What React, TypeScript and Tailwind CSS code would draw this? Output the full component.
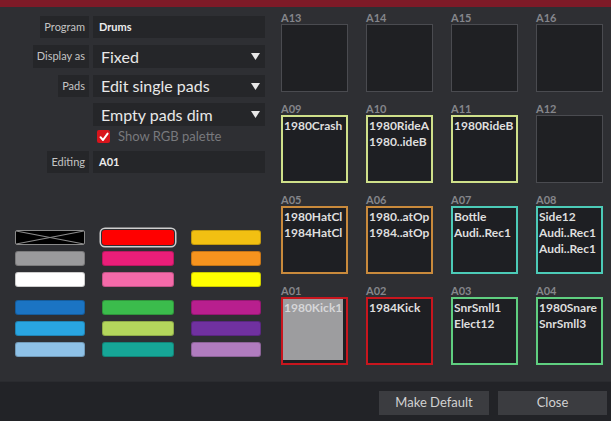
import React from "react";

type Pad = { id: string; lines: string[]; color?: string; filled?: boolean };

const rows: Pad[][] = [
  [
    { id: "A13", lines: [] },
    { id: "A14", lines: [] },
    { id: "A15", lines: [] },
    { id: "A16", lines: [] },
  ],
  [
    { id: "A09", lines: ["1980Crash"], color: "#cfe08a" },
    { id: "A10", lines: ["1980RideA", "1980..ideB"], color: "#cfe08a" },
    { id: "A11", lines: ["1980RideB"], color: "#cfe08a" },
    { id: "A12", lines: [] },
  ],
  [
    { id: "A05", lines: ["1980HatCl", "1984HatCl"], color: "#c98a3c" },
    { id: "A06", lines: ["1980..atOp", "1984..atOp"], color: "#c98a3c" },
    { id: "A07", lines: ["Bottle", "Audi..Rec1"], color: "#4ccbb8" },
    { id: "A08", lines: ["Side12", "Audi..Rec1", "Audi..Rec1"], color: "#4ccbb8" },
  ],
  [
    { id: "A01", lines: ["1980Kick1"], color: "#c8161e", filled: true },
    { id: "A02", lines: ["1984Kick"], color: "#c8161e" },
    { id: "A03", lines: ["SnrSmll1", "Elect12"], color: "#5fcf80" },
    { id: "A04", lines: ["1980Snare", "SnrSmll3"], color: "#5fcf80" },
  ],
];

function Arrow() {
  return (
    <svg width="9" height="7" viewBox="0 0 9 7" className="shrink-0">
      <path d="M0 0 L9 0 L4.5 7 Z" fill="#e8e8e8" />
    </svg>
  );
}

function Label({ children }: { children: React.ReactNode }) {
  return (
    <div className="w-[86px] flex justify-end">
      <div className="h-full bg-[#252629] px-[4px] flex items-center text-[11px] text-[#c4c4c4]">
        {children}
      </div>
    </div>
  );
}

function PadCell({ pad }: { pad: Pad }) {
  const bordered = !!pad.color;
  return (
    <div className="flex flex-col w-[67px]">
      <div className="h-[13px] leading-[13px] text-[11px] font-bold text-[#85868b]">{pad.id}</div>
      <div
        className={
          bordered
            ? "h-[68px] bg-[#1e1f23] border-2 relative"
            : "h-[68px] bg-[#1f2023] border border-[#4a4b50] relative"
        }
        style={bordered ? { borderColor: pad.color } : undefined}
      >
        {pad.filled && (
          <div className="absolute left-0 top-0 right-[3px] bottom-[3px] bg-[#9d9d9f]" />
        )}
        <div className="relative pl-[1px] pt-[1px] text-[12px] leading-[16px] font-bold text-[#dedede] whitespace-nowrap">
          {pad.lines.map((l, i) => (
            <div key={i} className={pad.filled ? "text-[#d6d6d8]" : ""}>
              {l}
            </div>
          ))}
        </div>
      </div>
    </div>
  );
}

function Swatch({ color, selected }: { color: string; selected?: boolean }) {
  return (
    <div
      className={
        selected
          ? "h-[15px] rounded-[3px] shadow-[0_0_0_1px_#2e2f33,0_0_0_2.5px_#cfcfcf]"
          : "h-[15px] rounded-[3px] border border-black/20"
      }
      style={{ backgroundColor: color }}
    />
  );
}

function CrossSwatch() {
  return (
    <div className="h-[15px] rounded-[2px] bg-black border-[1.5px] border-[#8a8a8a] overflow-hidden">
      <svg width="100%" height="100%" viewBox="0 0 70 12" preserveAspectRatio="none">
        <line x1="0" y1="0" x2="70" y2="12" stroke="#8a8a8a" strokeWidth="1" />
        <line x1="0" y1="12" x2="70" y2="0" stroke="#8a8a8a" strokeWidth="1" />
      </svg>
    </div>
  );
}

export default function App() {
  return (
    <div className="w-[611px] h-[426px] bg-white overflow-hidden font-['Lato','Noto_Sans',sans-serif]">
      <div className="w-[611px] h-[421px] flex flex-col bg-[#2e2f33]">
        <div className="h-[7px] bg-[#7e1a27] shrink-0" />
        <div className="flex-1 flex">
          {/* left panel */}
          <div className="w-[270px] shrink-0 flex flex-col pl-[3px]">
            <div className="flex h-[22px] gap-[4px] mt-[9px]">
              <Label>Program</Label>
              <div className="w-[172px] bg-[#252629] flex items-center pl-[6px] text-[11px] font-bold text-[#ececec]">
                Drums
              </div>
            </div>
            <div className="flex h-[23px] gap-[4px] mt-[7px]">
              <Label>Display as</Label>
              <div className="w-[172px] bg-[#252629] flex items-center justify-between pl-[8px] pr-[5px] text-[16px] text-[#e8e8e8]">
                <span>Fixed</span>
                <Arrow />
              </div>
            </div>
            <div className="flex h-[22px] gap-[4px] mt-[7px]">
              <Label>Pads</Label>
              <div className="w-[172px] bg-[#252629] flex items-center justify-between pl-[8px] pr-[5px] text-[16px] text-[#e8e8e8]">
                <span>Edit single pads</span>
                <Arrow />
              </div>
            </div>
            <div className="flex h-[23px] gap-[4px] mt-[6px]">
              <div className="w-[86px]" />
              <div className="w-[172px] bg-[#252629] flex items-center justify-between pl-[8px] pr-[5px] text-[16px] text-[#e8e8e8]">
                <span>Empty pads dim</span>
                <Arrow />
              </div>
            </div>
            <div className="flex h-[13px] mt-[4px] items-center">
              <div className="w-[94px]" />
              <div className="w-[13px] h-[13px] rounded-[2px] bg-[#d8141c] flex items-center justify-center">
                <svg width="10" height="10" viewBox="0 0 10 10">
                  <path d="M1.5 5.2 L4 8 L8.6 1.6" fill="none" stroke="white" strokeWidth="2" strokeLinecap="round" strokeLinejoin="round" />
                </svg>
              </div>
              <span className="ml-[8px] text-[13px] text-[#78797d]">Show RGB palette</span>
            </div>
            <div className="flex h-[22px] gap-[4px] mt-[8px]">
              <Label>Editing</Label>
              <div className="w-[172px] bg-[#252629] flex items-center pl-[6px] text-[11px] font-bold text-[#ececec]">
                A01
              </div>
            </div>

            <div className="mt-[57px] pl-[12px] grid grid-cols-[70px_72px_70px] gap-x-[17px] gap-y-[6px]">
              <CrossSwatch />
              <Swatch color="#ff0000" selected />
              <Swatch color="#f2c012" />
              <Swatch color="#9a9a9c" />
              <Swatch color="#ea1e79" />
              <Swatch color="#f7931e" />
              <Swatch color="#ffffff" />
              <Swatch color="#f46aa9" />
              <Swatch color="#ffff00" />
            </div>
            <div className="mt-[13px] pl-[12px] grid grid-cols-[70px_72px_70px] gap-x-[17px] gap-y-[6px]">
              <Swatch color="#1b74c3" />
              <Swatch color="#3bbc4c" />
              <Swatch color="#b81f8e" />
              <Swatch color="#29a5e1" />
              <Swatch color="#b4d65c" />
              <Swatch color="#7031a0" />
              <Swatch color="#8ec1e7" />
              <Swatch color="#16a697" />
              <Swatch color="#b07cbf" />
            </div>
          </div>

          {/* pads */}
          <div className="flex-1 pl-[11px] pt-[4px]">
            <div className="grid grid-cols-[67px_67px_67px_67px] gap-x-[18px] gap-y-[10px]">
              {rows.flat().map((p) => (
                <PadCell key={p.id} pad={p} />
              ))}
            </div>
          </div>
        </div>
        <div className="h-[40px] shrink-0 bg-[#222327] border-t border-[#2a2b2f] flex justify-end items-start pt-[9px] pr-[4px] gap-[9px]">
          <button className="w-[110px] h-[24px] bg-[#3b3c40] text-[13px] text-[#d2d2d2]">Make Default</button>
          <button className="w-[109px] h-[24px] bg-[#3b3c40] text-[13px] text-[#d2d2d2]">Close</button>
        </div>
      </div>
    </div>
  );
}
